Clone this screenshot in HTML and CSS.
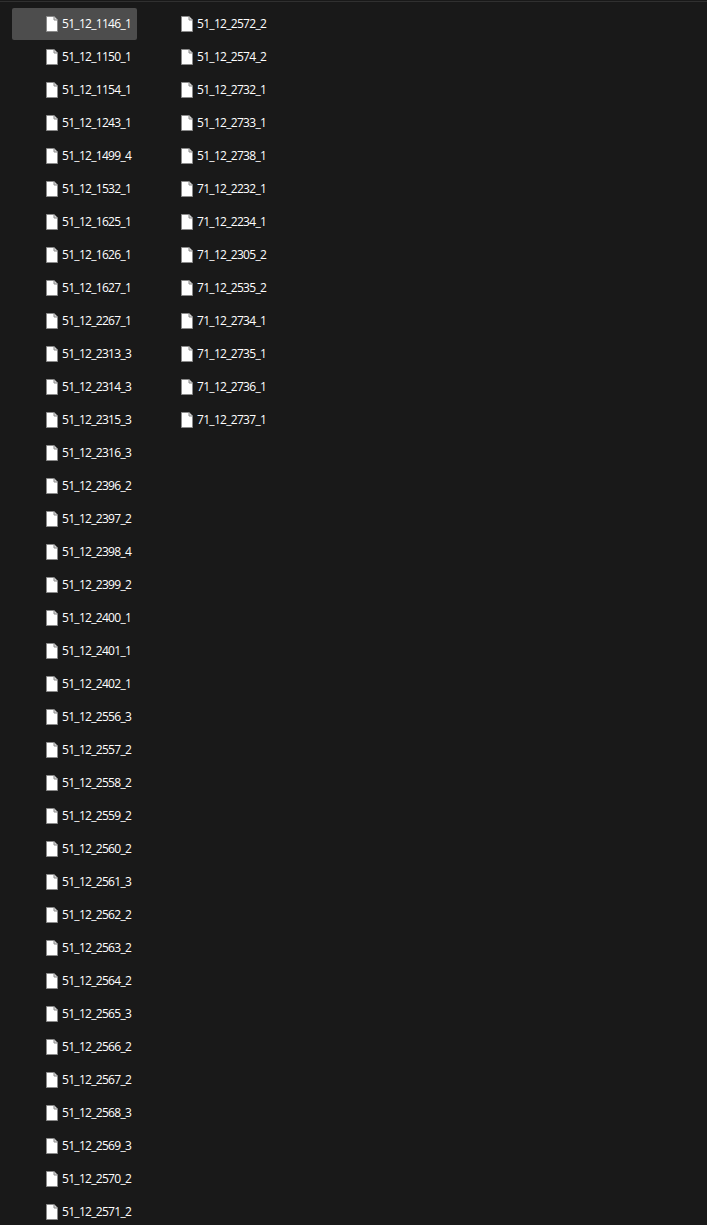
FILE: index.html
```html
<html><head>
    <title>Files</title>
    <link rel="stylesheet" href="styles.css">
    </head>
    <body>
    <svg class="sprite" width="0" height="0">
        <symbol id="doc" viewBox="0 0 12 16">
            <path class="page" d="M.5 .5H8L11.5 4V15.5H.5Z"/>
            <path class="fold" d="M8 .5V4H11.5"/>
        </symbol>
    </svg>
    <div class="files">
        <div class="file selected"><svg class="icon"><use href="#doc"/></svg><span>51_12_1146_1</span></div>
        <div class="file"><svg class="icon"><use href="#doc"/></svg><span>51_12_1150_1</span></div>
        <div class="file"><svg class="icon"><use href="#doc"/></svg><span>51_12_1154_1</span></div>
        <div class="file"><svg class="icon"><use href="#doc"/></svg><span>51_12_1243_1</span></div>
        <div class="file"><svg class="icon"><use href="#doc"/></svg><span>51_12_1499_4</span></div>
        <div class="file"><svg class="icon"><use href="#doc"/></svg><span>51_12_1532_1</span></div>
        <div class="file"><svg class="icon"><use href="#doc"/></svg><span>51_12_1625_1</span></div>
        <div class="file"><svg class="icon"><use href="#doc"/></svg><span>51_12_1626_1</span></div>
        <div class="file"><svg class="icon"><use href="#doc"/></svg><span>51_12_1627_1</span></div>
        <div class="file"><svg class="icon"><use href="#doc"/></svg><span>51_12_2267_1</span></div>
        <div class="file"><svg class="icon"><use href="#doc"/></svg><span>51_12_2313_3</span></div>
        <div class="file"><svg class="icon"><use href="#doc"/></svg><span>51_12_2314_3</span></div>
        <div class="file"><svg class="icon"><use href="#doc"/></svg><span>51_12_2315_3</span></div>
        <div class="file"><svg class="icon"><use href="#doc"/></svg><span>51_12_2316_3</span></div>
        <div class="file"><svg class="icon"><use href="#doc"/></svg><span>51_12_2396_2</span></div>
        <div class="file"><svg class="icon"><use href="#doc"/></svg><span>51_12_2397_2</span></div>
        <div class="file"><svg class="icon"><use href="#doc"/></svg><span>51_12_2398_4</span></div>
        <div class="file"><svg class="icon"><use href="#doc"/></svg><span>51_12_2399_2</span></div>
        <div class="file"><svg class="icon"><use href="#doc"/></svg><span>51_12_2400_1</span></div>
        <div class="file"><svg class="icon"><use href="#doc"/></svg><span>51_12_2401_1</span></div>
        <div class="file"><svg class="icon"><use href="#doc"/></svg><span>51_12_2402_1</span></div>
        <div class="file"><svg class="icon"><use href="#doc"/></svg><span>51_12_2556_3</span></div>
        <div class="file"><svg class="icon"><use href="#doc"/></svg><span>51_12_2557_2</span></div>
        <div class="file"><svg class="icon"><use href="#doc"/></svg><span>51_12_2558_2</span></div>
        <div class="file"><svg class="icon"><use href="#doc"/></svg><span>51_12_2559_2</span></div>
        <div class="file"><svg class="icon"><use href="#doc"/></svg><span>51_12_2560_2</span></div>
        <div class="file"><svg class="icon"><use href="#doc"/></svg><span>51_12_2561_3</span></div>
        <div class="file"><svg class="icon"><use href="#doc"/></svg><span>51_12_2562_2</span></div>
        <div class="file"><svg class="icon"><use href="#doc"/></svg><span>51_12_2563_2</span></div>
        <div class="file"><svg class="icon"><use href="#doc"/></svg><span>51_12_2564_2</span></div>
        <div class="file"><svg class="icon"><use href="#doc"/></svg><span>51_12_2565_3</span></div>
        <div class="file"><svg class="icon"><use href="#doc"/></svg><span>51_12_2566_2</span></div>
        <div class="file"><svg class="icon"><use href="#doc"/></svg><span>51_12_2567_2</span></div>
        <div class="file"><svg class="icon"><use href="#doc"/></svg><span>51_12_2568_3</span></div>
        <div class="file"><svg class="icon"><use href="#doc"/></svg><span>51_12_2569_3</span></div>
        <div class="file"><svg class="icon"><use href="#doc"/></svg><span>51_12_2570_2</span></div>
        <div class="file"><svg class="icon"><use href="#doc"/></svg><span>51_12_2571_2</span></div>
        <div class="file"><svg class="icon"><use href="#doc"/></svg><span>51_12_2572_2</span></div>
        <div class="file"><svg class="icon"><use href="#doc"/></svg><span>51_12_2574_2</span></div>
        <div class="file"><svg class="icon"><use href="#doc"/></svg><span>51_12_2732_1</span></div>
        <div class="file"><svg class="icon"><use href="#doc"/></svg><span>51_12_2733_1</span></div>
        <div class="file"><svg class="icon"><use href="#doc"/></svg><span>51_12_2738_1</span></div>
        <div class="file"><svg class="icon"><use href="#doc"/></svg><span>71_12_2232_1</span></div>
        <div class="file"><svg class="icon"><use href="#doc"/></svg><span>71_12_2234_1</span></div>
        <div class="file"><svg class="icon"><use href="#doc"/></svg><span>71_12_2305_2</span></div>
        <div class="file"><svg class="icon"><use href="#doc"/></svg><span>71_12_2535_2</span></div>
        <div class="file"><svg class="icon"><use href="#doc"/></svg><span>71_12_2734_1</span></div>
        <div class="file"><svg class="icon"><use href="#doc"/></svg><span>71_12_2735_1</span></div>
        <div class="file"><svg class="icon"><use href="#doc"/></svg><span>71_12_2736_1</span></div>
        <div class="file"><svg class="icon"><use href="#doc"/></svg><span>71_12_2737_1</span></div>
    </div>
    </body>
    </html>
```

FILE: styles.css
```css
html {
    height: 100%;
    overflow: hidden;
    background-color: #191919;
}
body {
    margin: 1px 0 0;
    height: 100%;
    overflow: hidden;
    border-top: 1px solid #303030;
    font-family: "Open Sans", sans-serif;
    font-size: 12px;
    letter-spacing: -0.7px;
    color: #ffffff;
}
.sprite {
    position: absolute;
}
.files {
    display: grid;
    grid-auto-flow: column;
    grid-template-rows: repeat(37, 33px);
    grid-auto-columns: 125px;
    column-gap: 10px;
    padding: 6px 0 0 12px;
}
.file {
    display: flex;
    align-items: center;
    height: 32px;
    padding-left: 34px;
    gap: 4px;
    white-space: nowrap;
}
.file span {
    padding-bottom: 2px;
}
.selected {
    background-color: #4d4d4d;
    border-radius: 2px;
}
.icon {
    width: 12px;
    height: 16px;
    flex: none;
}
.page {
    fill: #ffffff;
    stroke: #8a8a8a;
}
.fold {
    fill: #d9d9d9;
    stroke: #8a8a8a;
}
```
